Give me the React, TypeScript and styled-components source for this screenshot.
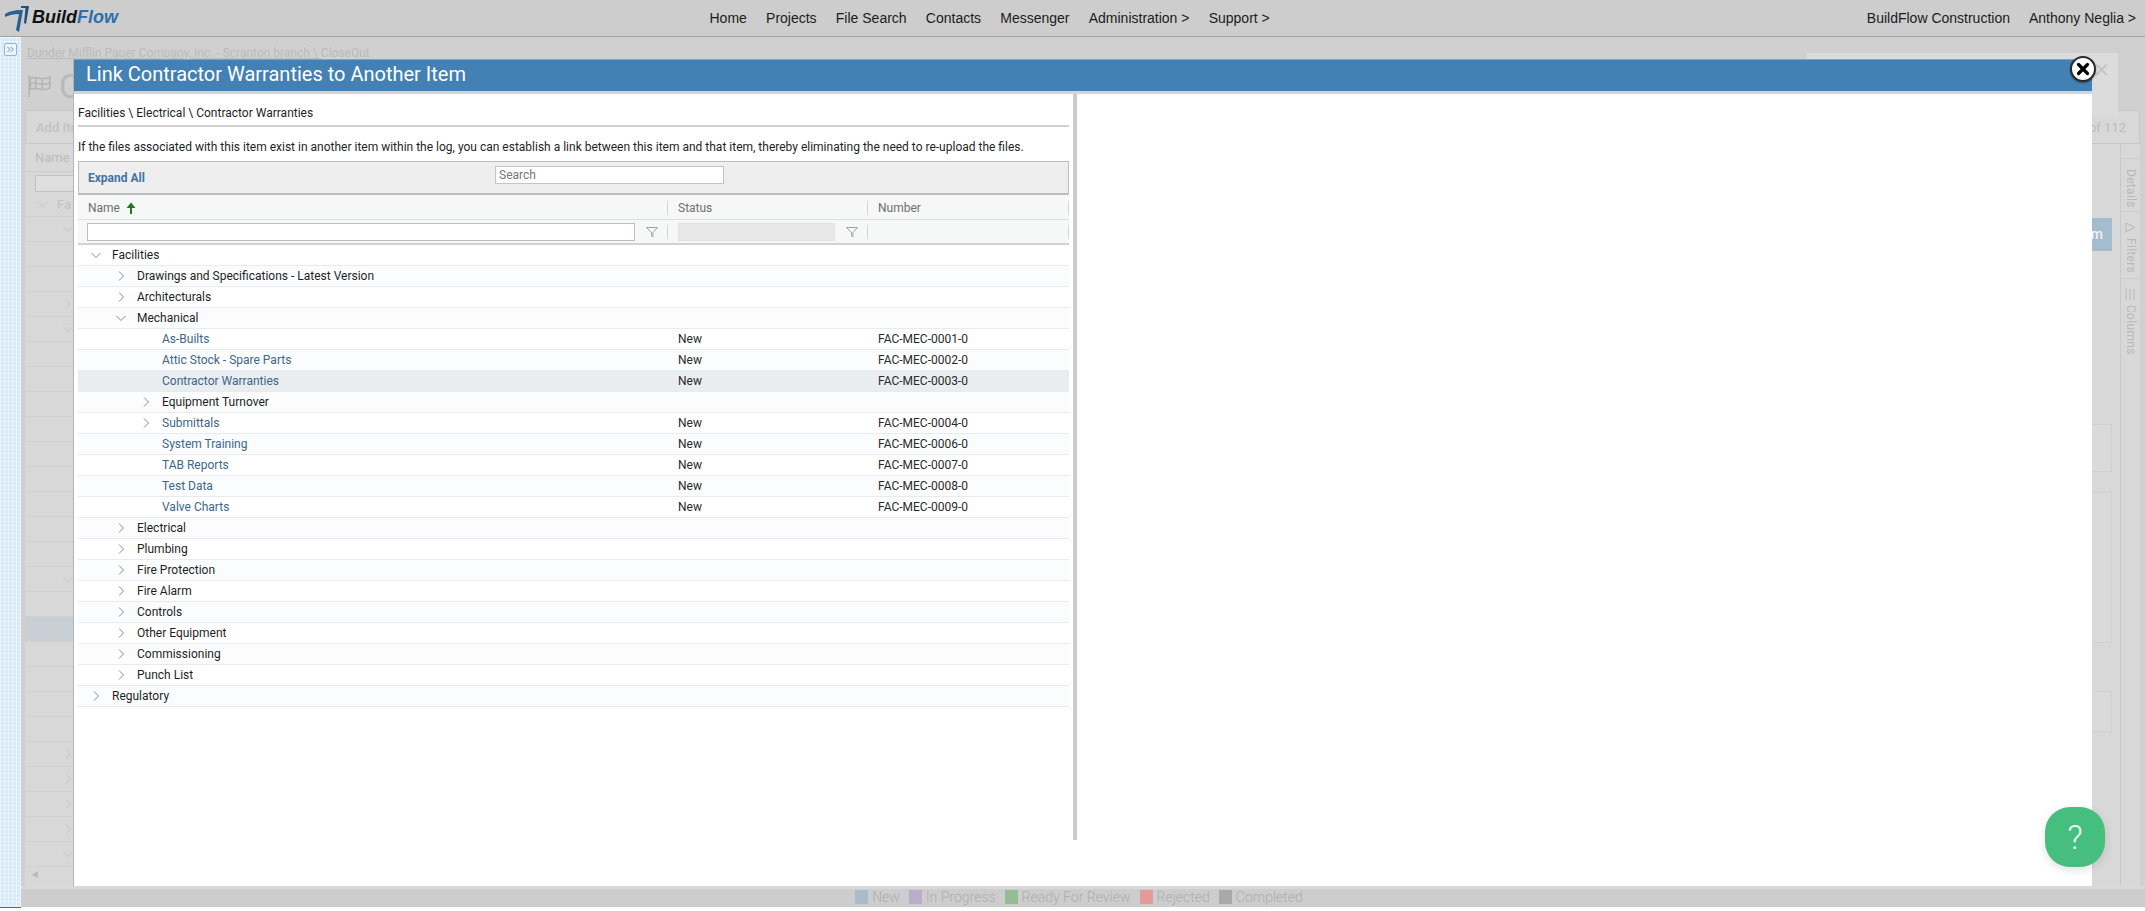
import React from 'react';
import styled, { createGlobalStyle } from 'styled-components';
import { ChevronsRight } from 'lucide-react';

const Global = createGlobalStyle`
  html, body { margin: 0; padding: 0; background: #fff; }
  * { box-sizing: border-box; }
`;

const Page = styled.div`
  position: relative; width: 2145px; height: 911px; overflow: hidden;
  display: flex; flex-direction: column;
  font-family: Roboto, "Liberation Sans", sans-serif;
`;
const Nav = styled.header`
  height: 37px; flex: none; display: flex; align-items: center;
  background: #cdcdcd; border-bottom: 1px solid #a2a2a2;
  font: 14px "Liberation Sans", Arial, sans-serif; color: #1c1c1c;
`;
const Logo = styled.div`
  width: 709.5px; flex: none; padding-left: 5px; display: flex; align-items: center; gap: 3px;
`;
const LogoText = styled.span`
  font: italic bold 18px "Liberation Sans", Arial, sans-serif; color: #111; margin-top: -2px;
`;
const LogoFlow = styled.span` color: #2f6ea8; `;
const NavLinks = styled.nav` display: flex; gap: 19.2px; margin-top: -1px; `;
const NavRight = styled.div` margin-left: auto; padding-right: 9px; display: flex; gap: 19px; margin-top: -1px; `;

const Body = styled.div` height: 871px; flex: none; display: flex; `;
const Strip = styled.aside`
  width: 21px; flex: none; padding: 6px 4px; border-bottom: 1px solid #666;
  background-color: #d8e8fb;
  background-image: linear-gradient(#ebf4ff 1px, transparent 1px), linear-gradient(90deg, #ebf4ff 1px, transparent 1px);
  background-size: 4px 4px;
`;
const StripButton = styled.div`
  width: 13px; height: 13px; border: 1px solid #8fb4d8; border-radius: 2px; background: #eef5fd; color: #2c6ca5;
  display: flex; align-items: center; justify-content: center;
`;
const Main = styled.main`
  flex: 1; min-width: 0; height: 870px; display: flex; flex-direction: column; padding-left: 4px;
  background: #d0d0d0; color: #bcbcbc;
`;
const Crumb = styled.div`
  height: 25px; padding: 9px 0 0 2px; font-size: 12px; line-height: 14px; color: #bbb; flex: none;
`;
const CrumbLink = styled.span` text-decoration: underline; `;
const TitleRow = styled.div`
  height: 48px; flex: none; display: flex; align-items: center; gap: 8px; padding-left: 2px;
  font-size: 34px; color: #b9b9b9;
`;
const NoticeBox = styled.div`
  position: absolute; left: 1807px; top: 53px; width: 311px; height: 62px; background: #dcdcdc;
  color: #c4c4c4; font-size: 20px; text-align: right; padding: 5px 8px;
`;
const PageToolbar = styled.div`
  height: 34px; flex: none; margin-right: 5px; display: flex; align-items: center; justify-content: space-between;
  padding: 0 13px 0 10px; border: 1px solid #c8c8c8; background: #d8d8d8; font-size: 13px;
`;
const AddItem = styled.b` font-weight: 500; color: #c2c2c2; `;
const Content = styled.div` flex: 1; min-height: 0; display: flex; `;
const TreePane = styled.div` flex: 1; min-width: 0; background: #d8d8d8; display: flex; flex-direction: column; overflow: hidden; `;
const BgHeader = styled.div` height: 28px; flex: none; padding: 0 10px; line-height: 28px; font-size: 13px; color: #bcbcbc; border-bottom: 1px solid #cdcdcd; `;
const BgFilter = styled.div` height: 20px; flex: none; padding: 3px 10px 0; `;
const BgInput = styled.div` width: 600px; height: 17px; border: 1px solid #c2c2c2; background: #dedede; `;
const BgRows = styled.div` flex: 1; min-height: 0; overflow: hidden; `;
const BgRow = styled.div<{ $sel?: boolean; $level: number }>`
  height: 25px; display: flex; align-items: center; gap: 8px; padding-left: ${p => 12 + p.$level * 25}px;
  border-bottom: 1px solid #d0d0d0; background: ${p => (p.$sel ? '#c8d0d6' : 'transparent')};
  color: #c2c2c2; font-size: 13px;
`;
const BgScroll = styled.div` height: 19px; flex: none; padding-left: 6px; color: #bbb; font-size: 9px; line-height: 14px; `;
const SidePanel = styled.div` width: 320px; flex: none; background: #d8d8d8; padding-right: 8px; display: flex; flex-direction: column; align-items: flex-end; `;
const SideButton = styled.div`
  margin-top: 74px; width: 120px; height: 33px; background: #a5bccf; color: #f0f4f7; font-size: 14px; font-weight: 500;
  line-height: 33px; text-align: right; padding-right: 9px;
`;
const SideCard = styled.div<{ $top: number; $h: number }>`
  width: 300px; flex: none; margin-top: ${p => p.$top}px; height: ${p => p.$h}px; border: 1px solid #d0d0d0; background: #dadada;
`;
const Tabs = styled.div` width: 21px; flex: none; margin-right: 4px; padding-top: 14px; background: #d8d8d8; border-left: 1px solid #c9c9c9; border-right: 1px solid #cfcfcf; `;
const Tab = styled.div<{ $h: number }>`
  height: ${p => p.$h}px; display: flex; flex-direction: column; align-items: center; gap: 5px; padding-top: 10px;
  border-top: 1px solid #cbcbcb; color: #b8b8b8; font-size: 12px;
`;
const TabLabel = styled.span` writing-mode: vertical-rl; letter-spacing: .3px; `;
const Legend = styled.footer`
  height: 21px; flex: none; display: flex; align-items: center; justify-content: center; gap: 9px;
  padding: 0 8px 2px 0; margin-left: -4px; background: #cdcdcd; border-top: 3px solid #d9d9d9; color: #adadad; font-size: 14px; font-weight: 300;
`;
const LegendItem = styled.span` display: flex; align-items: center; gap: 4px; `;
const Swatch = styled.i<{ $c: string }>` width: 13px; height: 14px; background: ${p => p.$c}; display: block; `;

const Modal = styled.section`
  position: absolute; left: 73px; top: 59px; width: 2019px; height: 827px; background: #fff;
  border-left: 1px solid #b5b5b5; display: flex; flex-direction: column;
`;
const ModalHeader = styled.div`
  height: 32px; flex: none; background: #4380b4; color: #fff; font-size: 20px; line-height: 29px; padding-left: 12px;
  border-top: 1px solid #7aa5cb; box-shadow: 0 3px 0 #d4d4d4;
`;
const ModalBody = styled.div` flex: 1; min-height: 0; display: flex; gap: 4px; padding: 3px 0 0 4px; `;
const LeftPane = styled.div` width: 991px; flex: none; color: #1f1f1f; font-size: 12px; `;
const Divider = styled.div` width: 4px; height: 746px; flex: none; background: #cbcbcb; `;
const PathLine = styled.div` padding: 10px 0 3px; line-height: 18px; border-bottom: 2px solid #cfcfcf; `;
const Intro = styled.p` margin: 0; padding: 11px 0 5px; line-height: 18px; `;
const ToolBar = styled.div`
  height: 34px; display: grid; grid-template-columns: 416px 229px; background: #eee;
  border: 1px solid #bdbdbd; border-bottom-width: 2px;
`;
const ExpandAll = styled.b` align-self: center; padding-left: 9px; font-weight: 700; color: #44739f; `;
const SearchBox = styled.input`
  margin-top: 4px; height: 18px; width: 229px; border: 1px solid #c4c4c4; background: #fff; padding: 0 3px;
  font: 12px Roboto, sans-serif; &::placeholder { color: #777; opacity: 1; }
`;
const GridCols = styled.div<{ $h: number; $line: string; $bw?: number }>`
  height: ${p => p.$h}px; display: grid; grid-template-columns: 590px 200px 201px; background: #f6f7f7;
  border-bottom: ${p => p.$bw ?? 1}px solid ${p => p.$line}; color: #6f6f6f;
`;
const HeadCell = styled.div` display: flex; align-items: center; padding: 2px 0 0 10px; gap: 6px; `;
const FilterCell = styled.div<{ $pad: number }>` display: flex; align-items: center; padding-left: ${p => p.$pad}px; `;
const Sep = styled.i` width: 1px; height: 14px; background: #d7d7d7; margin-left: auto; display: block; `;
const FilterInput = styled.div<{ $w: number; $off?: boolean }>`
  width: ${p => p.$w}px; height: 18px; flex: none; border: 1px solid ${p => (p.$off ? '#e2e2e2' : '#bdbdbd')};
  background: ${p => (p.$off ? '#e8e8e8' : '#fff')};
`;
const FunnelSlot = styled.span` margin-left: 11px; display: flex; `;
const Row = styled.div<{ $alt: boolean; $sel: boolean }>`
  height: 21px; display: grid; grid-template-columns: 590px 200px 201px; align-items: center;
  background: ${p => (p.$sel ? '#e9edef' : p.$alt ? '#fbfcfd' : '#fff')};
  border-bottom: 1px solid #e7ebee;
`;
const NameCell = styled.div<{ $level: number }>`
  display: flex; align-items: center; gap: 10px; padding-left: ${p => 12 + p.$level * 25}px; min-width: 0;
`;
const ChevSlot = styled.span` width: 12px; height: 12px; flex: none; display: flex; `;
const ItemLabel = styled.span<{ $link: boolean }>` color: ${p => (p.$link ? '#3b6788' : '#1f1f1f')}; white-space: nowrap; `;
const ValueCell = styled.span` padding-left: 10px; color: #2a2a2a; `;

const CloseBtn = styled.button`
  position: absolute; left: 2070px; top: 56px; width: 26px; height: 26px; padding: 0; border-radius: 50%;
  background: #fff; border: 2px solid #2a2a2a; box-shadow: 0 1px 2px rgba(0,0,0,.4);
  display: flex; align-items: center; justify-content: center;
`;
const HelpBtn = styled.div`
  position: absolute; left: 2045px; top: 807px; width: 60px; height: 60px; border-radius: 25px;
  background: #46be7d; color: #eafff2; font-size: 34px; font-weight: 300; line-height: 60px; text-align: center;
  box-shadow: 0 3px 10px rgba(0,0,0,.12);
`;

const Chev = ({ open, color = '#8a8a8a' }: { open?: boolean; color?: string }) => (
  <svg width="12" height="12" viewBox="0 0 12 12" fill="none" stroke={color} strokeWidth="1">
    {open ? <path d="M1.5 4 L6 8.5 L10.5 4" /> : <path d="M4 1.5 L8.5 6 L4 10.5" />}
  </svg>
);
const Funnel = () => (
  <svg width="12" height="12" viewBox="0 0 12 12" fill="none" stroke="#969696" strokeWidth="0.9">
    <path d="M0.5 1.5 H11.5 L7 6.5 V11 L5.5 9.5 V6.5 Z" />
  </svg>
);
const SortUp = () => (
  <svg width="10" height="12" viewBox="0 0 10 12" fill="#1f7a1f">
    <path d="M5 0.5 L9.5 6 H6 V12 H4 V6 H0.5 Z" />
  </svg>
);
const LogoMark = () => (
  <svg width="24" height="30" viewBox="0 0 24 30">
    <path d="M0 11 C5 8 10 7 15 7 L18 7 L14 29 L11 27 L14 11 C9 11 4 12 0 14 Z" fill="#2c5f96" />
    <path d="M16 3 H24 L21 21 L19 20 L20.5 5 H16 Z" fill="#1f4e7f" />
  </svg>
);
const Flag = () => (
  <svg width="24" height="24" viewBox="0 0 22 22" fill="none" stroke="#b4b4b4" strokeWidth="1.4">
    <path d="M2 1 V21" />
    <path d="M3 4 C8 1 12 7 21 3 V13 C13 17 8 11 3 14 Z" />
    <path d="M3 9 C8 6 13 12 21 8 M8 4 V13 M14 5 V14" />
  </svg>
);

type Item = { name: string; level: number; exp?: 'open' | 'closed'; link?: boolean; status?: string; num?: string; sel?: boolean };
const items: Item[] = [
  { name: 'Facilities', level: 0, exp: 'open' },
  { name: 'Drawings and Specifications - Latest Version', level: 1, exp: 'closed' },
  { name: 'Architecturals', level: 1, exp: 'closed' },
  { name: 'Mechanical', level: 1, exp: 'open' },
  { name: 'As-Builts', level: 2, link: true, status: 'New', num: 'FAC-MEC-0001-0' },
  { name: 'Attic Stock - Spare Parts', level: 2, link: true, status: 'New', num: 'FAC-MEC-0002-0' },
  { name: 'Contractor Warranties', level: 2, link: true, status: 'New', num: 'FAC-MEC-0003-0', sel: true },
  { name: 'Equipment Turnover', level: 2, exp: 'closed' },
  { name: 'Submittals', level: 2, exp: 'closed', link: true, status: 'New', num: 'FAC-MEC-0004-0' },
  { name: 'System Training', level: 2, link: true, status: 'New', num: 'FAC-MEC-0006-0' },
  { name: 'TAB Reports', level: 2, link: true, status: 'New', num: 'FAC-MEC-0007-0' },
  { name: 'Test Data', level: 2, link: true, status: 'New', num: 'FAC-MEC-0008-0' },
  { name: 'Valve Charts', level: 2, link: true, status: 'New', num: 'FAC-MEC-0009-0' },
  { name: 'Electrical', level: 1, exp: 'closed' },
  { name: 'Plumbing', level: 1, exp: 'closed' },
  { name: 'Fire Protection', level: 1, exp: 'closed' },
  { name: 'Fire Alarm', level: 1, exp: 'closed' },
  { name: 'Controls', level: 1, exp: 'closed' },
  { name: 'Other Equipment', level: 1, exp: 'closed' },
  { name: 'Commissioning', level: 1, exp: 'closed' },
  { name: 'Punch List', level: 1, exp: 'closed' },
  { name: 'Regulatory', level: 0, exp: 'closed' },
];

const bgRows: { level: number; exp?: 'open' | 'closed'; label?: string; sel?: boolean }[] = Array.from({ length: 27 }, (_, k) => {
  if (k === 0) return { level: 0, exp: 'open' as const, label: 'Fa' };
  if (k === 1 || k === 5 || k === 15 || k === 26) return { level: 1, exp: 'open' as const };
  if (k === 4 || (k >= 22 && k <= 25)) return { level: 1, exp: 'closed' as const };
  if (k === 17) return { level: 1, sel: true };
  return { level: 1 };
});

const legend = [
  ['New', '#a8bccd'], ['In Progress', '#b8aecb'], ['Ready For Review', '#94bd94'], ['Rejected', '#e59a9a'], ['Completed', '#a9a9a9'],
];

export default function App() {
  return (
    <Page>
      <Global />
      <Nav>
        <Logo>
          <LogoMark />
          <LogoText>Build<LogoFlow>Flow</LogoFlow></LogoText>
        </Logo>
        <NavLinks>
          <span>Home</span><span>Projects</span><span>File Search</span><span>Contacts</span>
          <span>Messenger</span><span>Administration &gt;</span><span>Support &gt;</span>
        </NavLinks>
        <NavRight><span>BuildFlow Construction</span><span>Anthony Neglia &gt;</span></NavRight>
      </Nav>
      <Body>
        <Strip><StripButton><ChevronsRight size={11} strokeWidth={1.6} /></StripButton></Strip>
        <Main>
          <Crumb><CrumbLink>Dunder Mifflin Paper Company, Inc. - Scranton branch \ </CrumbLink> CloseOut</Crumb>
          <TitleRow><Flag /><span>CloseOut</span></TitleRow>
          <PageToolbar><AddItem>Add Item</AddItem><span>1 - 25 of 112</span></PageToolbar>
          <Content>
            <TreePane>
              <BgHeader>Name</BgHeader>
              <BgFilter><BgInput /></BgFilter>
              <BgRows>
                {bgRows.map((r, i) => (
                  <BgRow key={i} $level={r.level} $sel={r.sel}>
                    <ChevSlot>{r.exp && <Chev open={r.exp === 'open'} color="#c4c4c4" />}</ChevSlot>
                    {r.label && <span>{r.label}</span>}
                  </BgRow>
                ))}
              </BgRows>
              <BgScroll>◀</BgScroll>
            </TreePane>
            <SidePanel>
              <SideButton>Submit Item</SideButton>
              <SideCard $top={173} $h={48} />
              <SideCard $top={20} $h={151} />
              <SideCard $top={48} $h={41} />
            </SidePanel>
            <Tabs>
              <Tab $h={53}><TabLabel>Details</TabLabel></Tab>
              <Tab $h={67}>
                <svg width="11" height="11" viewBox="0 0 11 11" fill="none" stroke="#b8b8b8"><path d="M1 1 L10 5.5 L1 10 Z" /></svg>
                <TabLabel>Filters</TabLabel>
              </Tab>
              <Tab $h={80}>
                <svg width="11" height="11" viewBox="0 0 11 11" stroke="#b8b8b8"><path d="M1 0 V11 M5 0 V11 M9 0 V11" /></svg>
                <TabLabel>Columns</TabLabel>
              </Tab>
            </Tabs>
          </Content>
          <Legend>
            {legend.map(([t, c]) => (
              <LegendItem key={t}><Swatch $c={c} />{t}</LegendItem>
            ))}
          </Legend>
        </Main>
      </Body>
      <NoticeBox>✕</NoticeBox>
      <Modal>
        <ModalHeader>Link Contractor Warranties to Another Item</ModalHeader>
        <ModalBody>
          <LeftPane>
            <PathLine>Facilities \ Electrical \ Contractor Warranties</PathLine>
            <Intro>If the files associated with this item exist in another item within the log, you can establish a link between this item and that item, thereby eliminating the need to re-upload the files.</Intro>
            <ToolBar>
              <ExpandAll>Expand All</ExpandAll>
              <SearchBox placeholder="Search" />
            </ToolBar>
            <GridCols $h={25} $line="#dcdfe0">
              <HeadCell>Name <SortUp /><Sep /></HeadCell>
              <HeadCell>Status<Sep /></HeadCell>
              <HeadCell>Number<Sep /></HeadCell>
            </GridCols>
            <GridCols $h={25} $line="#d2d2d2" $bw={2}>
              <FilterCell $pad={9}><FilterInput $w={548} /><FunnelSlot><Funnel /></FunnelSlot><Sep /></FilterCell>
              <FilterCell $pad={10}><FilterInput $off $w={157} /><FunnelSlot><Funnel /></FunnelSlot><Sep /></FilterCell>
              <FilterCell $pad={10}><Sep /></FilterCell>
            </GridCols>
            {items.map((it, i) => (
              <Row key={it.name} $alt={i % 2 === 1} $sel={!!it.sel}>
                <NameCell $level={it.level}>
                  <ChevSlot>{it.exp && <Chev open={it.exp === 'open'} />}</ChevSlot>
                  <ItemLabel $link={!!it.link}>{it.name}</ItemLabel>
                </NameCell>
                <ValueCell>{it.status}</ValueCell>
                <ValueCell>{it.num}</ValueCell>
              </Row>
            ))}
          </LeftPane>
          <Divider />
        </ModalBody>
      </Modal>
      <CloseBtn aria-label="Close">
        <svg width="14" height="14" viewBox="0 0 14 14" stroke="#000" strokeWidth="3.2" strokeLinecap="round"><path d="M2.5 2.5 L11.5 11.5 M11.5 2.5 L2.5 11.5" /></svg>
      </CloseBtn>
      <HelpBtn>?</HelpBtn>
    </Page>
  );
}
